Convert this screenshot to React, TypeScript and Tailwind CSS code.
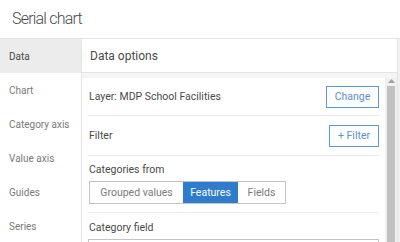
import React from "react";

export default function App() {
  const side = ["Data", "Chart", "Category axis", "Value axis", "Guides", "Series"];
  return (
    <div
      className="w-[400px] h-[242px] overflow-hidden bg-white text-[#4c4c4c]"
      style={{ fontFamily: "Roboto, 'Open Sans', sans-serif" }}
    >
      <div className="h-[39px] border-b border-[#e4e4e4] flex items-center pl-[12px] text-[16px] font-light tracking-[-0.8px] text-[#4a4a4a]">
        Serial chart
      </div>
      <div className="flex h-[203px]">
        <div className="w-[82px] border-r border-[#e4e4e4] shrink-0">
          {side.map((s, i) => (
            <div
              key={s}
              className={
                "h-[34px] flex items-center pl-[9px] text-[10px] " +
                (i === 0 ? "bg-[#ececec] text-[#4a4a4a]" : "text-[#7a7a7a]")
              }
            >
              {s}
            </div>
          ))}
        </div>
        <div className="flex-1 flex flex-col border-r border-[#e4e4e4]">
          <div className="h-[34px] shrink-0 border-b border-[#e4e4e4] flex items-center pl-[8px] text-[12px] text-[#4a4a4a]">
            Data options
          </div>
          <div className="flex-1 flex bg-[#f5f5f5] pt-[5px] overflow-hidden">
            <div className="flex-1 bg-white px-[6px] text-[10.5px] text-[#4a4a4a]">
              <div className="h-[38px] border-b border-[#e8e8e8] flex items-center justify-between pl-px">
                <span>Layer: MDP School Facilities</span>
                <button className="h-[22px] w-[53px] border border-[#5a9ad8] text-[#5b8fcf] text-[10.5px] flex items-center justify-center bg-white">
                  Change
                </button>
              </div>
              <div className="h-[40px] border-b border-[#e8e8e8] flex items-center justify-between pl-px">
                <span>Filter</span>
                <button className="h-[22px] w-[50px] border border-[#5a9ad8] text-[#5b8fcf] text-[10.5px] flex items-center justify-center bg-white">
                  + Filter
                </button>
              </div>
              <div className="h-[57px] border-b border-[#ececec] pl-px pt-[7px]">
                <div className="leading-[14px]">Categories from</div>
                <div className="mt-[4px] flex w-[197px] h-[23px] border border-[#c4c4c4] text-[10.5px]">
                  <div className="w-[93px] flex items-center justify-center text-[#7a7a7a]">Grouped values</div>
                  <div className="w-[55px] flex items-center justify-center bg-[#2e7ccb] text-white">Features</div>
                  <div className="flex-1 flex items-center justify-center text-[#7a7a7a]">Fields</div>
                </div>
              </div>
              <div className="pl-px pt-[8px] leading-[14px]">Category field</div>
              <div className="mt-[4px] h-[20px] border border-[#c4c4c4]"></div>
            </div>
            <div className="w-[12px] bg-[#f0f0f0] flex flex-col items-center">
              <svg width="7" height="4" className="mt-[1px]" viewBox="0 0 7 4">
                <path d="M0 4 L3.5 0 L7 4 Z" fill="#a0a0a0" />
              </svg>
              <div className="mt-[3px] w-[8px] flex-1 bg-[#c1c1c1]"></div>
            </div>
          </div>
        </div>
        <div className="w-[2px] bg-[#f0f0f0]"></div>
      </div>
    </div>
  );
}
